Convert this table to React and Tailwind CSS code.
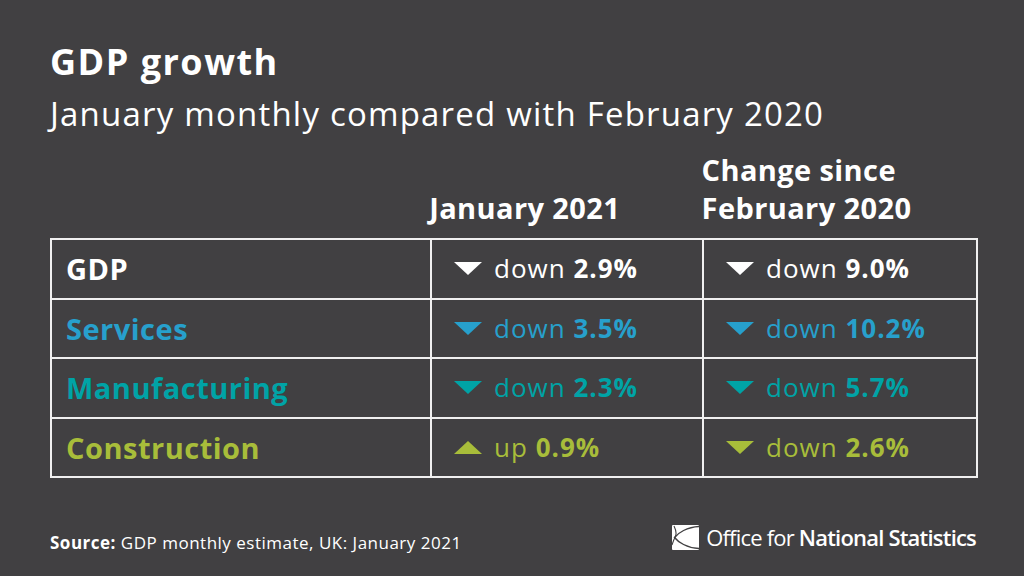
import React from "react";

const font = { fontFamily: '"Open Sans", "Noto Sans", sans-serif' };

function Tri({ up, color }) {
  return (
    <svg width="28" height="13" viewBox="0 0 28 13" className="shrink-0">
      {up ? (
        <polygon points="0,13 28,13 14,0" fill={color} />
      ) : (
        <polygon points="0,0 28,0 14,13" fill={color} />
      )}
    </svg>
  );
}

const rows = [
  { label: "GDP", color: "#ffffff", a: ["down", "2.9%", false], b: ["down", "9.0%", false] },
  { label: "Services", color: "#27a0cc", a: ["down", "3.5%", false], b: ["down", "10.2%", false] },
  { label: "Manufacturing", color: "#00a3a6", a: ["down", "2.3%", false], b: ["down", "5.7%", false] },
  { label: "Construction", color: "#a8bd3a", a: ["up", "0.9%", true], b: ["down", "2.6%", false] },
];

function Cell({ d, color }) {
  return (
    <td className="border-2 border-[#f0f0f0] pl-[22px] align-middle">
      <div className="flex items-center gap-[12px] text-[26px] tracking-[1px]" style={{ color }}>
        <Tri up={d[2]} color={color} />
        <span>
          {d[0]} <b className="font-bold">{d[1]}</b>
        </span>
      </div>
    </td>
  );
}

export default function App() {
  return (
    <div className="w-[1024px] h-[576px] bg-[#414042] text-white flex flex-col px-[50px] pt-[38px] overflow-hidden" style={font}>
      <h1 className="text-[36px] font-bold leading-[48px] tracking-[1.5px]">GDP growth</h1>
      <h2 className="text-[33px] leading-[44px] mt-[6px] tracking-[1.2px]">January monthly compared with February 2020</h2>
      <div className="flex mt-[15px] text-[29px] font-bold leading-[38px] items-end tracking-[0.4px]">
        <div className="w-[380px]" />
        <div className="w-[272px]">January 2021</div>
        <div className="w-[274px] pl-[1px]">Change since<br />February 2020</div>
      </div>
      <table className="mt-[11px] w-[926px] border-collapse table-fixed">
        <colgroup>
          <col className="w-[380px]" />
          <col className="w-[272px]" />
          <col className="w-[274px]" />
        </colgroup>
        <tbody>
          {rows.map((r) => (
            <tr key={r.label} className="h-[59.5px]">
              <td className="border-2 border-[#f0f0f0] pl-[14px] text-[29px] font-bold tracking-[0.5px]" style={{ color: r.color }}>
                {r.label}
              </td>
              <Cell d={r.a} color={r.color} />
              <Cell d={r.b} color={r.color} />
            </tr>
          ))}
        </tbody>
      </table>
      <div className="flex items-end justify-between mt-[44px] h-[31px]">
        <div className="text-[17px] leading-[23px] tracking-[0.5px] mb-[-1px]"><b className="font-bold">Source:</b> GDP monthly estimate, UK: January 2021</div>
        <div className="flex items-center gap-[7px] -mr-[2px] h-[31px] pb-[1px]">
          <svg width="27" height="25" viewBox="0 0 27 25">
            <rect x="0" y="0" width="27" height="25" rx="1" fill="#fff" />
            <path d="M27 1.5 C 15 2, 6 8, 2.5 12.5 C 6 17, 15 23, 27 23.5" fill="none" stroke="#414042" strokeWidth="1.4" />
            <path d="M2 1 C 4 5, 5 9, 3 12.5 C 1.5 15, 1 17, 0 20" fill="none" stroke="#414042" strokeWidth="1.1" />
          </svg>
          <span className="text-[22px] leading-[30px] tracking-[-0.8px]">
            Office for <span className="font-semibold">National Statistics</span>
          </span>
        </div>
      </div>
    </div>
  );
}
